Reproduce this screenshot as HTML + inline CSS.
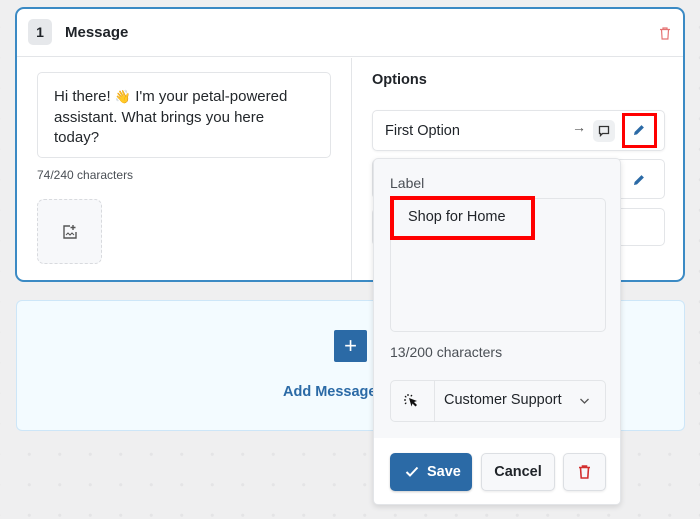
<!DOCTYPE html>
<html><head><style>
*{box-sizing:border-box;margin:0;padding:0}
body{width:700px;height:519px;overflow:hidden;background:#efeff0;font-family:"Liberation Sans",sans-serif;color:#1f2328;position:relative;
background-image:radial-gradient(circle,#e4e4e6 1.4px,transparent 1.8px);background-size:30.5px 30.5px;background-position:14px 12px}
.abs{position:absolute}
.card{left:15px;top:7px;width:670px;height:275px;background:#fff;border:2px solid #3b8ac4;border-radius:9px;overflow:hidden}
</style></head><body>
<div class="abs card">
  <div class="abs" style="left:0;top:0;width:666px;height:48px;border-bottom:1px solid #e3e5e8"></div>
  <div class="abs" style="left:11px;top:10px;width:24px;height:26px;background:#e6e8eb;border-radius:5px;font-size:14px;font-weight:bold;text-align:center;line-height:26px">1</div>
  <div class="abs" style="left:48px;top:15px;font-size:15px;font-weight:bold">Message</div>
  <svg class="abs" style="left:642px;top:18px" width="12" height="13" viewBox="0 0 12 13" fill="none" stroke="#e57373" stroke-width="1.2"><path d="M1 2.5h10M4 2.5V1h4v1.5M2.5 2.5l.6 9.5h5.8l.6-9.5"/></svg>
  <div class="abs" style="left:334px;top:49px;width:1px;height:230px;background:#e3e5e8"></div>
  <div class="abs" style="left:20px;top:63px;width:294px;height:86px;border:1px solid #e3e5e8;border-radius:5px;padding:14px 16px;font-size:15px;line-height:20.5px;color:#23272b">Hi there! <span style="font-size:13px">👋</span> I'm your petal-powered<br>assistant. What brings you here<br>today?</div>
  <div class="abs" style="left:20px;top:159px;font-size:12px;color:#4a4f55">74/240 characters</div>
  <div class="abs" style="left:20px;top:190px;width:65px;height:65px;border:1.5px dashed #d8dade;border-radius:7px;background:#f7f8fa"></div>
  <svg class="abs" style="left:44px;top:214px" width="18" height="18" viewBox="0 0 18 18" fill="none" stroke="#555" stroke-width="1.4"><path d="M9 3H3v12h12V9M12 2v5M9.5 4.5h5"/><path d="M5 12l2-2 2 2 2-2 2 2" stroke-width="1"/></svg>
  <div class="abs" style="left:355px;top:63px;font-size:14.5px;font-weight:bold">Options</div>
  <div class="abs" style="left:355px;top:101px;width:293px;height:41px;border:1px solid #e3e5e8;border-radius:5px;box-shadow:0 1px 2px rgba(0,0,0,.05)"></div>
  <div class="abs" style="left:368px;top:114px;font-size:14.5px">First Option</div>
  <div class="abs" style="left:555px;top:110px;font-size:14px;color:#555">→</div>
  <div class="abs" style="left:576px;top:111px;width:22px;height:22px;background:#eef0f2;border-radius:5px"></div>
  <svg class="abs" style="left:581px;top:116px" width="12" height="12" viewBox="0 0 12 12" fill="none" stroke="#333" stroke-width="1.3"><path d="M1.5 1.5h9v7h-6l-2 2v-2h-1z"/></svg>
  <div class="abs" style="left:605px;top:104px;width:35px;height:35px;border:3.5px solid #f00"></div>
  <svg class="abs" style="left:615px;top:114px" width="14" height="14" viewBox="0 0 14 14"><path d="M2 12l.6-3L9.5 2.1l2.4 2.4L5 11.4z" fill="#2b6aa6"/></svg>
  <div class="abs" style="left:355px;top:150px;width:293px;height:40px;border:1px solid #e3e5e8;border-radius:5px"></div>
  <svg class="abs" style="left:615px;top:164px" width="14" height="14" viewBox="0 0 14 14"><path d="M2 12l.6-3L9.5 2.1l2.4 2.4L5 11.4z" fill="#2b6aa6"/></svg>
  <div class="abs" style="left:355px;top:199px;width:293px;height:38px;border:1px solid #e3e5e8;border-radius:5px"></div>
</div>
<div class="abs" style="left:16px;top:300px;width:669px;height:131px;background:#f3fbff;border:1px solid #cde6f8;border-radius:6px"></div>
<div class="abs" style="left:334px;top:330px;width:33px;height:32px;background:#2b6aa6;border-radius:2px;color:#fff;font-size:22px;text-align:center;line-height:31px">+</div>
<div class="abs" style="left:283px;top:384px;font-size:14.5px;font-weight:bold;color:#2b6aa6">Add Message</div>
<div class="abs" style="left:373px;top:158px;width:248px;height:347px;background:#f7f8fa;border:1px solid #e3e5e8;border-radius:5px;box-shadow:0 2px 6px rgba(0,0,0,.12);overflow:hidden">
  <div class="abs" style="left:16px;top:16px;font-size:14px;color:#4a4f55">Label</div>
  <div class="abs" style="left:16px;top:39px;width:216px;height:134px;border:1px solid #e3e5e8;border-radius:5px"></div>
  <div class="abs" style="left:16px;top:37px;width:145px;height:44px;border:4px solid #f00"></div>
  <div class="abs" style="left:34px;top:50px;font-size:14.5px">Shop for Home</div>
  <div class="abs" style="left:16px;top:185px;font-size:14px;color:#4a4f55">13/200 characters</div>
  <div class="abs" style="left:16px;top:221px;width:216px;height:42px;border:1px solid #e3e5e8;border-radius:5px"></div>
  <div class="abs" style="left:60px;top:221px;width:1px;height:42px;background:#e3e5e8"></div>
  <svg class="abs" style="left:29px;top:234px" width="16" height="16" viewBox="0 0 16 16"><path d="M6 5l8 3-3 1 3 3-1.5 1.5-3-3-1 3z" fill="#111"/><path d="M1 7h2M5 1v2M2 3l1.3 1.3M2 11l1.3-1.3M9 2L7.8 3.3" stroke="#111" stroke-width="1.2"/></svg>
  <div class="abs" style="left:70px;top:233px;font-size:14.5px">Customer Support</div>
  <svg class="abs" style="left:205px;top:238px" width="11" height="8" viewBox="0 0 11 8" fill="none" stroke="#555" stroke-width="1.3"><path d="M1.5 2l4 4 4-4"/></svg>
  <div class="abs" style="left:0;top:279px;width:248px;height:70px;background:#fff"></div>
  <div class="abs" style="left:16px;top:294px;width:82px;height:38px;background:#2b6aa6;border-radius:5px;box-shadow:0 1px 2px rgba(0,0,0,.2);color:#fff;font-size:14.5px;font-weight:bold;line-height:38px;padding-left:37px">Save</div>
  <svg class="abs" style="left:31px;top:306px" width="14" height="13" viewBox="0 0 14 13" fill="none" stroke="#fff" stroke-width="2"><path d="M1.5 7l3.5 3.5 7.5-8"/></svg>
  <div class="abs" style="left:107px;top:294px;width:74px;height:38px;background:#f7f8fa;border:1px solid #dcdfe3;border-radius:5px;box-shadow:0 1px 2px rgba(0,0,0,.08);font-size:14.5px;font-weight:bold;text-align:center;line-height:36px">Cancel</div>
  <div class="abs" style="left:189px;top:294px;width:43px;height:38px;background:#f7f8fa;border:1px solid #dcdfe3;border-radius:5px;box-shadow:0 1px 2px rgba(0,0,0,.08)"></div>
  <svg class="abs" style="left:204px;top:306px" width="13" height="14" viewBox="0 0 13 14" fill="none" stroke="#d32f2f" stroke-width="1.6"><path d="M1 2.5h11M4.5 2.5V1h4v1.5M2.5 2.5l.7 10.5h6.6l.7-10.5"/></svg>
</div>
</body></html>
